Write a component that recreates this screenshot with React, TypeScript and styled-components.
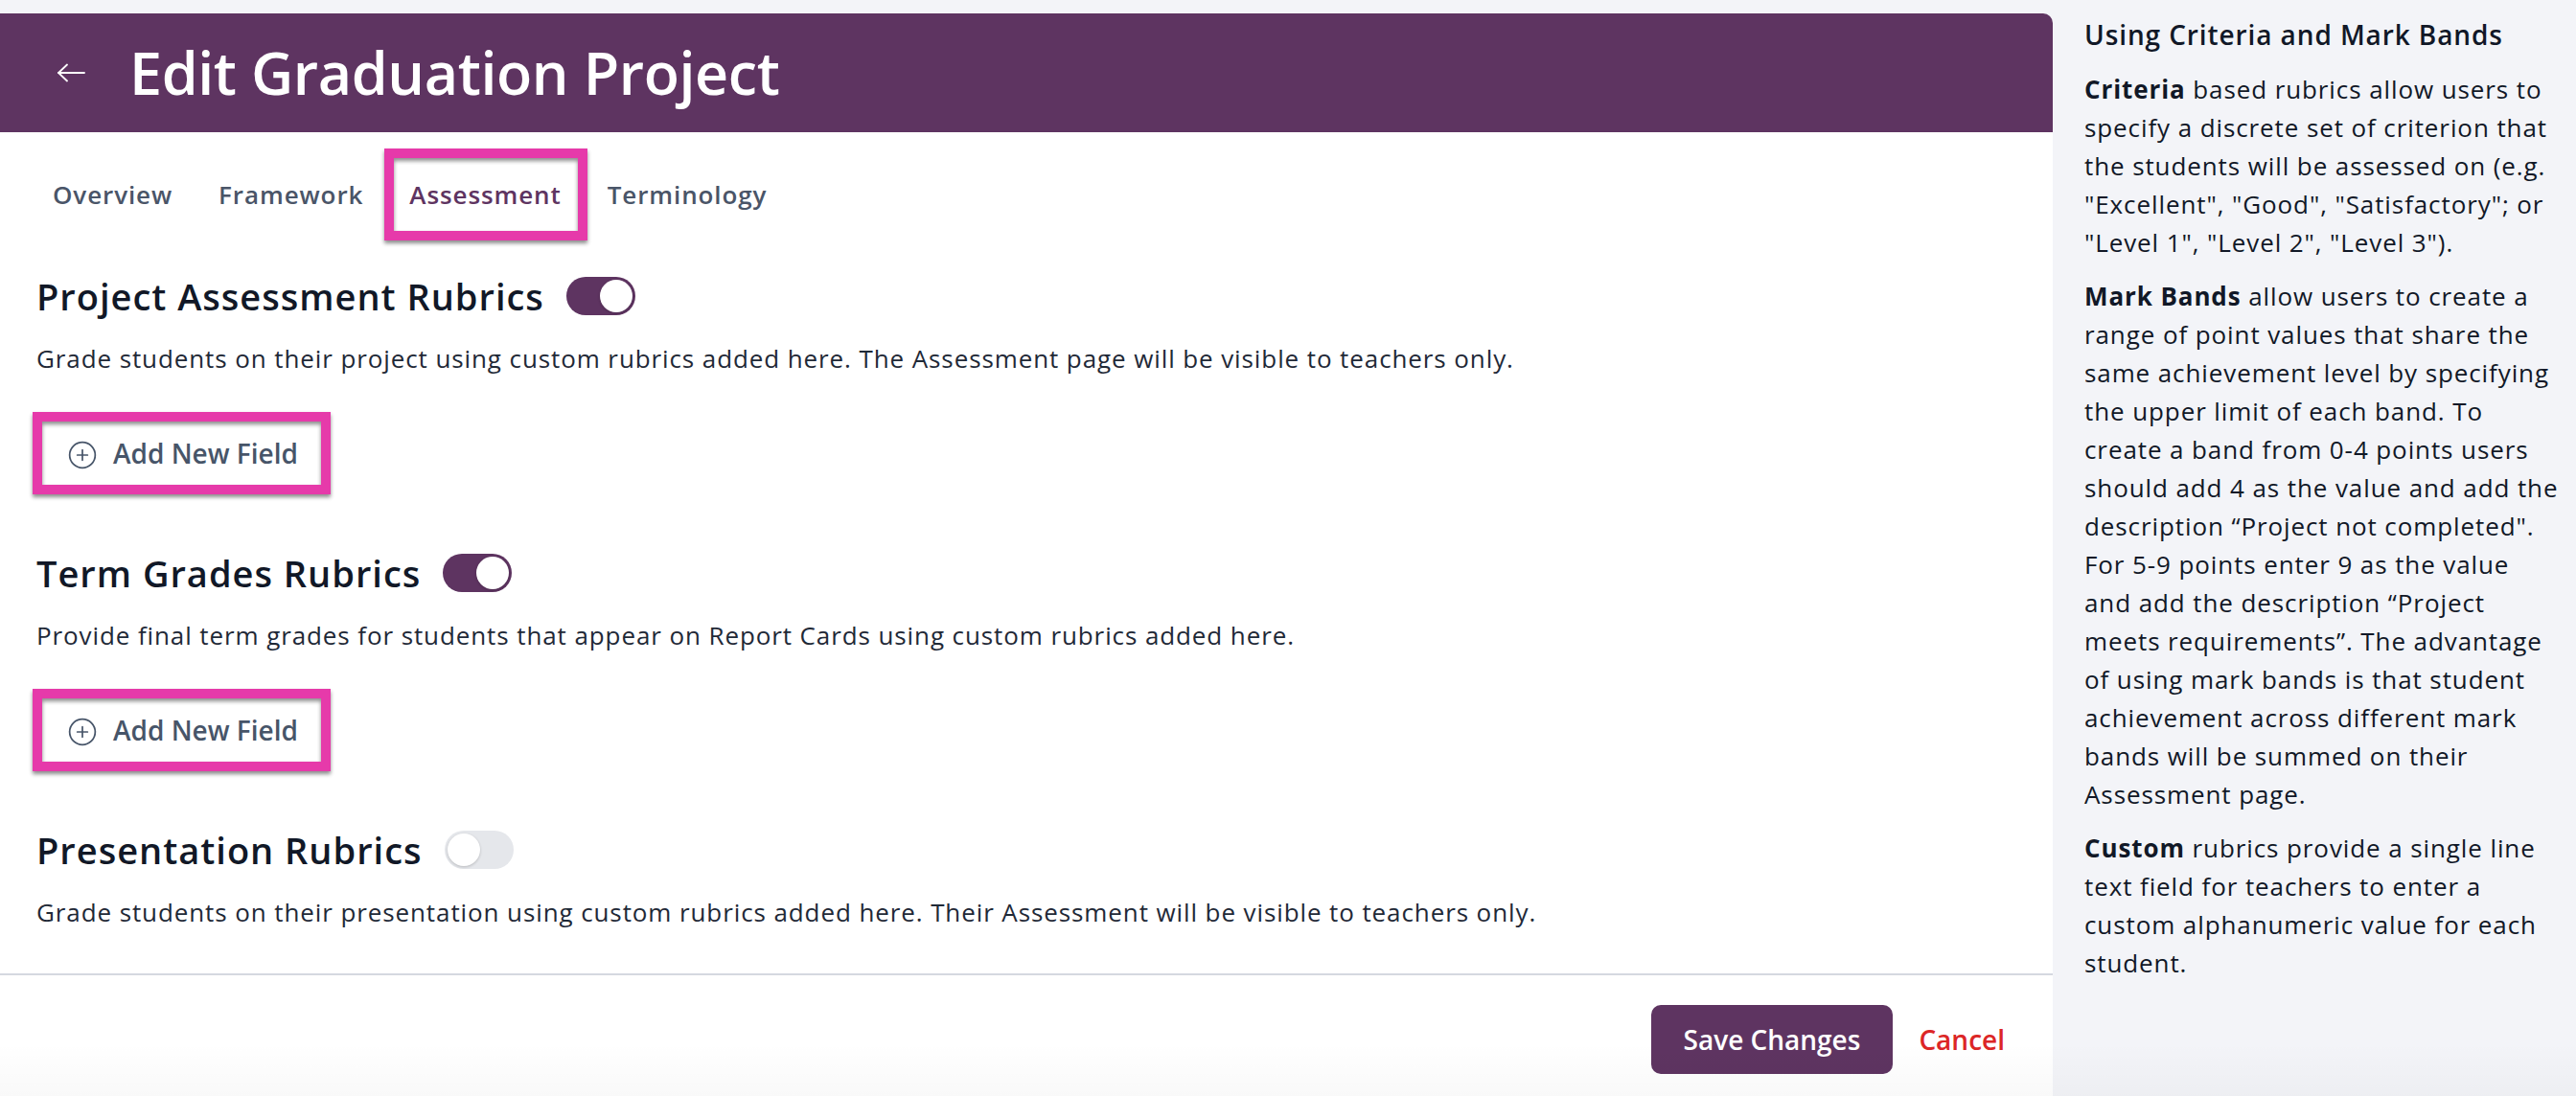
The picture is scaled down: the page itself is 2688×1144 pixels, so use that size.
import { useState } from 'react';
import styled, { createGlobalStyle, css } from 'styled-components';
import { CirclePlus } from 'lucide-react';

const purple = '#5e3461';
const pink = '#e63aaa';

const GlobalStyle = createGlobalStyle`
  html, body {
    margin: 0;
    padding: 0;
    background: #f3f4f8;
    font-family: 'Open Sans', 'Noto Sans', sans-serif;
    -webkit-font-smoothing: antialiased;
  }
  * {
    box-sizing: border-box;
  }
`;

const Page = styled.div`
  position: relative;
  display: grid;
  grid-template-columns: 2142px 1fr;
  height: 1144px;
  overflow: hidden;
`;

// faint shade along the bottom edge of the window
const BottomFade = styled.div`
  position: absolute;
  left: 0;
  right: 0;
  bottom: 0;
  height: 56px;
  pointer-events: none;
  background: linear-gradient(to bottom, rgba(0, 0, 0, 0), rgba(0, 0, 0, 0.025));
`;

const MainColumn = styled.div`
  padding-top: 14px;
  display: flex;
  flex-direction: column;
`;

const Card = styled.div`
  flex: 1;
  display: flex;
  flex-direction: column;
  background: white;
  border-top-right-radius: 10px;
`;

const Header = styled.header`
  height: 124px;
  display: flex;
  align-items: center;
  gap: 45px;
  padding-left: 60px;
  background: ${purple};
  border-top-right-radius: 10px;
`;

const BackButton = styled.button`
  display: flex;
  padding: 0;
  border: none;
  background: none;
  cursor: pointer;
`;

const PageTitle = styled.h1`
  margin: 0;
  color: white;
  font-size: 61px;
  line-height: 84px;
  font-weight: 600;
  letter-spacing: -0.4px;
`;

const TabList = styled.nav`
  display: flex;
  padding: 19px 0 0 31px;
`;

// The highlighted tab and buttons carry a thick pink frame with a soft shadow
const highlight = css`
  border-color: ${pink};
  box-shadow: 0 3px 4px rgba(0, 0, 0, 0.45), inset 0 3px 4px rgba(0, 0, 0, 0.45);
`;

const Tab = styled.button<{ $active?: boolean }>`
  padding: 18px 14px;
  border: 10px solid transparent;
  background: none;
  font-family: inherit;
  font-size: 26px;
  line-height: 36px;
  font-weight: 600;
  letter-spacing: 0.9px;
  color: ${(p) => (p.$active ? purple : '#4a5568')};
  cursor: pointer;
  ${(p) =>
    p.$active &&
    css`
      ${highlight}
      padding: 20px 17px 20px 16px;
      margin: -2px -3px -2px -2px;
    `}
`;

const Content = styled.div`
  display: flex;
  flex-direction: column;
  gap: 56px;
  padding: 34px 38px 46px;
`;

const Section = styled.section`
  display: flex;
  flex-direction: column;
  align-items: flex-start;
`;

const TitleRow = styled.div`
  display: flex;
  align-items: center;
  gap: 23px;
`;

const SectionTitle = styled.h2`
  margin: 0;
  font-size: 38px;
  line-height: 52px;
  font-weight: 600;
  letter-spacing: 1px;
  color: #111827;
`;

const Description = styled.p`
  margin: 21px 0 0;
  font-size: 26px;
  line-height: 36px;
  letter-spacing: 0.9px;
  color: #1f2937;
`;

const AddButton = styled.button`
  margin: 38px 0 0 -4px;
  height: 86px;
  display: flex;
  align-items: center;
  gap: 16px;
  padding: 0 24px 0 26px;
  background: white;
  border: 10px solid ${pink};
  ${highlight}
  font-family: inherit;
  font-size: 28px;
  line-height: 38px;
  font-weight: 600;
  color: #475569;
  cursor: pointer;
  svg {
    margin-top: 3px;
  }
`;

const Track = styled.button<{ $on: boolean }>`
  position: relative;
  width: 72px;
  height: 40px;
  padding: 0;
  border: none;
  border-radius: 20px;
  background: ${(p) => (p.$on ? purple : '#e5e7eb')};
  cursor: pointer;
`;

const Knob = styled.span<{ $on: boolean }>`
  position: absolute;
  top: 3px;
  left: ${(p) => (p.$on ? '35px' : '3px')};
  width: 34px;
  height: 34px;
  border-radius: 50%;
  background: white;
  box-shadow: 0 1px 3px rgba(0, 0, 0, 0.2);
`;

const Footer = styled.footer`
  display: flex;
  justify-content: flex-end;
  align-items: center;
  gap: 27px;
  padding: 31px 50px 0 0;
  border-top: 2px solid #d5d8e0;
`;

const SaveButton = styled.button`
  height: 72px;
  padding: 0 34px;
  border: none;
  border-radius: 10px;
  background: ${purple};
  color: white;
  font-family: inherit;
  font-size: 28px;
  font-weight: 600;
  cursor: pointer;
`;

const CancelButton = styled.button`
  padding: 0;
  border: none;
  background: none;
  color: #dc2626;
  font-family: inherit;
  font-size: 28px;
  font-weight: 600;
  cursor: pointer;
`;

const Sidebar = styled.aside`
  padding: 16px 13px 0 33px;
  color: #111827;
`;

const SideTitle = styled.h3`
  margin: 0;
  font-size: 28px;
  line-height: 40px;
  font-weight: 600;
  letter-spacing: 0.9px;
`;

const SideText = styled.p`
  margin: 17px 0 0;
  font-size: 26px;
  line-height: 40px;
  letter-spacing: 0.9px;
  & + & {
    margin-top: 16px;
  }
  b {
    font-weight: 700;
  }
`;

const Toggle = ({ on, onChange }: { on: boolean; onChange: () => void }) => (
  <Track $on={on} onClick={onChange} aria-pressed={on}>
    <Knob $on={on} />
  </Track>
);

const ArrowLeft = () => (
  <svg width="30" height="20" viewBox="0 0 30 20" fill="none" stroke="white" strokeWidth="1.8" strokeLinecap="round">
    <path d="M1 10H28" />
    <path d="M10 1.5L1 10L10 18.5" />
  </svg>
);

const tabs = ['Overview', 'Framework', 'Assessment', 'Terminology'];

const rubrics = [
  {
    key: 'project',
    title: 'Project Assessment Rubrics',
    text: 'Grade students on their project using custom rubrics added here. The Assessment page will be visible to teachers only.',
    on: true,
  },
  {
    key: 'term',
    title: 'Term Grades Rubrics',
    text: 'Provide final term grades for students that appear on Report Cards using custom rubrics added here.',
    on: true,
  },
  {
    key: 'presentation',
    title: 'Presentation Rubrics',
    text: 'Grade students on their presentation using custom rubrics added here. Their Assessment will be visible to teachers only.',
    on: false,
  },
];

export default function App() {
  const [activeTab, setActiveTab] = useState('Assessment');
  const [enabled, setEnabled] = useState<Record<string, boolean>>(
    Object.fromEntries(rubrics.map((r) => [r.key, r.on]))
  );

  return (
    <>
      <GlobalStyle />
      <Page>
        <MainColumn>
          <Card>
            <Header>
              <BackButton aria-label="Back">
                <ArrowLeft />
              </BackButton>
              <PageTitle>Edit Graduation Project</PageTitle>
            </Header>
            <TabList>
              {tabs.map((t) => (
                <Tab key={t} $active={t === activeTab} onClick={() => setActiveTab(t)}>
                  {t}
                </Tab>
              ))}
            </TabList>
            <Content>
              {rubrics.map((r) => (
                <Section key={r.key}>
                  <TitleRow>
                    <SectionTitle>{r.title}</SectionTitle>
                    <Toggle
                      on={enabled[r.key]}
                      onChange={() => setEnabled((s) => ({ ...s, [r.key]: !s[r.key] }))}
                    />
                  </TitleRow>
                  <Description>{r.text}</Description>
                  {enabled[r.key] && (
                    <AddButton>
                      <CirclePlus size={32} strokeWidth={1.3} />
                      Add New Field
                    </AddButton>
                  )}
                </Section>
              ))}
            </Content>
            <Footer>
              <SaveButton>Save Changes</SaveButton>
              <CancelButton>Cancel</CancelButton>
            </Footer>
          </Card>
        </MainColumn>
        <Sidebar>
          <SideTitle>Using Criteria and Mark Bands</SideTitle>
          <SideText>
            <b>Criteria</b> based rubrics allow users to specify a discrete set of criterion that the students will be
            assessed on (e.g. "Excellent", "Good", "Satisfactory"; or "Level 1", "Level 2", "Level 3").
          </SideText>
          <SideText>
            <b>Mark Bands</b> allow users to create a range of point values that share the same achievement level by
            specifying the upper limit of each band. To create a band from 0-4 points users should add 4 as the value
            and add the description “Project not completed". For 5-9 points enter 9 as the value and add the
            description “Project meets requirements”. The advantage of using mark bands is that student achievement
            across different mark bands will be summed on their Assessment page.
          </SideText>
          <SideText>
            <b>Custom</b> rubrics provide a single line text field for teachers to enter a custom alphanumeric value
            for each student.
          </SideText>
        </Sidebar>
        <BottomFade />
      </Page>
    </>
  );
}
